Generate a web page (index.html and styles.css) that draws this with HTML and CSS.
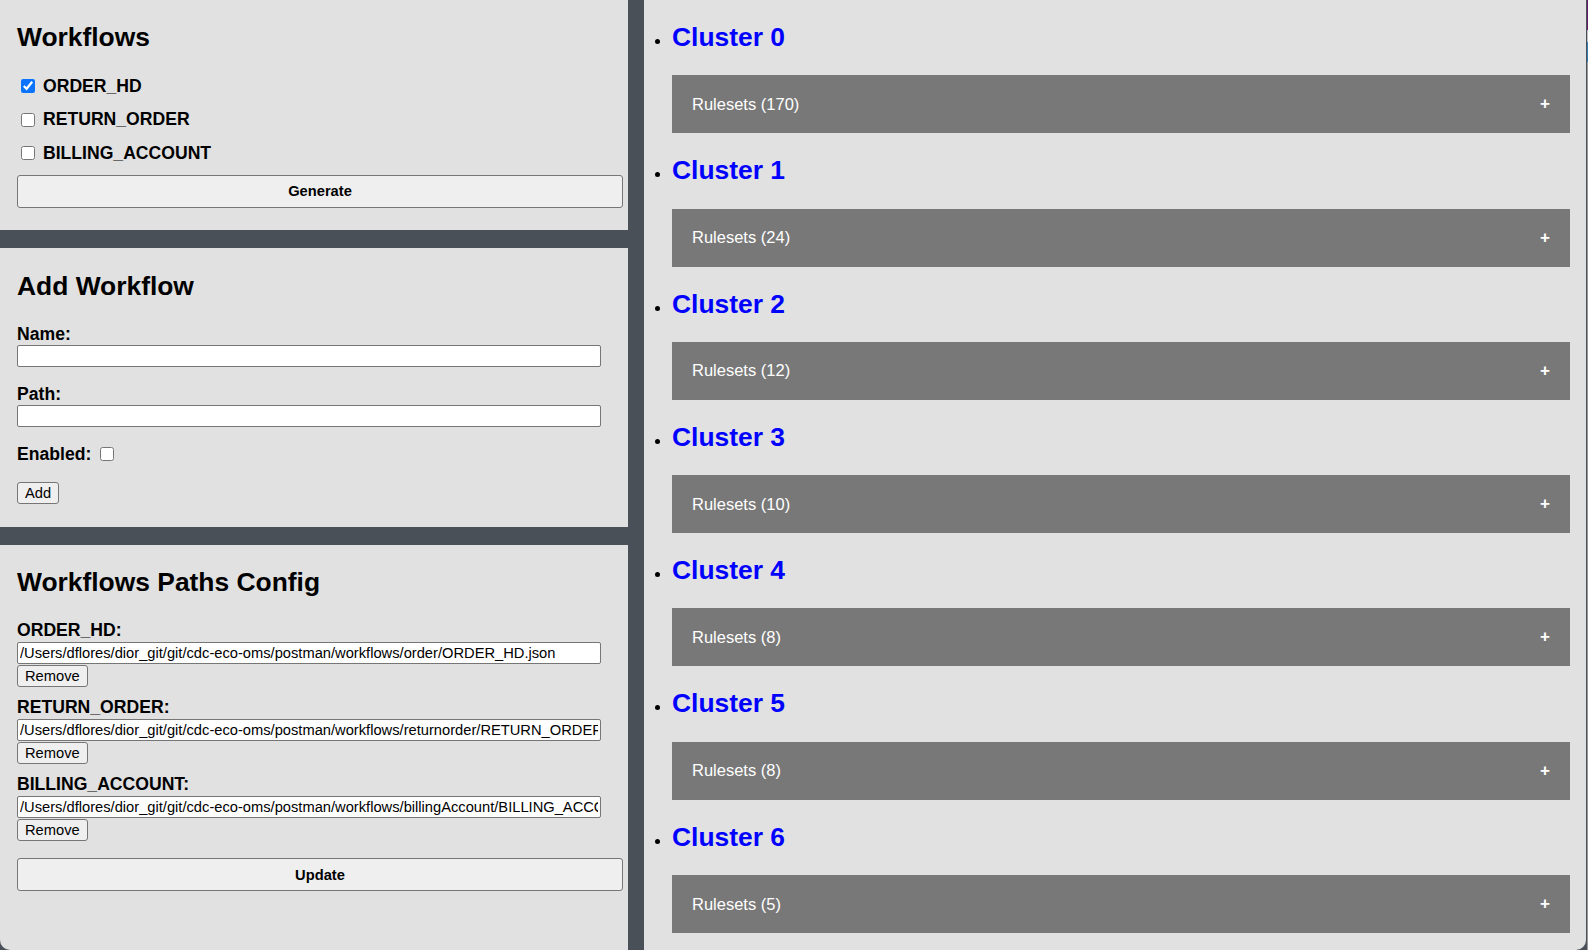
FILE: index.html
```html
<!DOCTYPE html>
<html lang="en">
<head>
<meta charset="utf-8">
<title>Workflows</title>
<link rel="stylesheet" href="styles.css">
</head>
<body>
<div class="left">
  <section class="panel p1">
    <h2 class="title">Workflows</h2>
    <label class="check-row"><input type="checkbox" checked> ORDER_HD</label>
    <label class="check-row"><input type="checkbox"> RETURN_ORDER</label>
    <label class="check-row"><input type="checkbox"> BILLING_ACCOUNT</label>
    <button class="wide-btn">Generate</button>
  </section>
  <section class="panel p2">
    <h2 class="title">Add Workflow</h2>
    <div class="field-label">Name:</div>
    <input class="text-in" type="text">
    <div class="field-label second">Path:</div>
    <input class="text-in" type="text">
    <label class="enabled-row">Enabled: <input type="checkbox"></label>
    <button class="small-btn add">Add</button>
  </section>
  <section class="panel p3">
    <h2 class="title">Workflows Paths Config</h2>
    <div class="cfg first">
      <div class="field-label">ORDER_HD:</div>
      <input class="text-in" type="text" value="/Users/dflores/dior_git/git/cdc-eco-oms/postman/workflows/order/ORDER_HD.json">
      <button class="small-btn">Remove</button>
    </div>
    <div class="cfg">
      <div class="field-label">RETURN_ORDER:</div>
      <input class="text-in" type="text" value="/Users/dflores/dior_git/git/cdc-eco-oms/postman/workflows/returnorder/RETURN_ORDER.json">
      <button class="small-btn">Remove</button>
    </div>
    <div class="cfg">
      <div class="field-label">BILLING_ACCOUNT:</div>
      <input class="text-in" type="text" value="/Users/dflores/dior_git/git/cdc-eco-oms/postman/workflows/billingAccount/BILLING_ACCOUNT.json">
      <button class="small-btn">Remove</button>
    </div>
    <button class="wide-btn update">Update</button>
  </section>
</div>
<main class="right">
  <ul class="clusters">
    <li><h2 class="cluster">Cluster 0</h2><div class="bar"><span>Rulesets (170)</span><span class="plus">+</span></div></li>
    <li><h2 class="cluster">Cluster 1</h2><div class="bar"><span>Rulesets (24)</span><span class="plus">+</span></div></li>
    <li><h2 class="cluster">Cluster 2</h2><div class="bar"><span>Rulesets (12)</span><span class="plus">+</span></div></li>
    <li><h2 class="cluster">Cluster 3</h2><div class="bar"><span>Rulesets (10)</span><span class="plus">+</span></div></li>
    <li><h2 class="cluster">Cluster 4</h2><div class="bar"><span>Rulesets (8)</span><span class="plus">+</span></div></li>
    <li><h2 class="cluster">Cluster 5</h2><div class="bar"><span>Rulesets (8)</span><span class="plus">+</span></div></li>
    <li><h2 class="cluster">Cluster 6</h2><div class="bar"><span>Rulesets (5)</span><span class="plus">+</span></div></li>
  </ul>
</main>
<div class="edge"></div>
</body>
</html>
```

FILE: styles.css
```css
* { box-sizing: border-box; }
html, body { height: 100%; }
body {
  margin: 0;
  background: #495057;
  font-family: "Liberation Sans", Arial, Helvetica, sans-serif;
  font-size: 17.6px;
  color: #000;
  display: flex;
  height: 950px;
  overflow: hidden;
}
.left {
  width: 628px;
  height: 950px;
  display: flex;
  flex-direction: column;
  gap: 18px;
  flex-shrink: 0;
}
.panel {
  background: #e1e1e1;
  padding: 0 5px 0 17px;
  display: flex;
  flex-direction: column;
  align-items: flex-start;
}
.p1 { height: 230px; }
.p2 { height: 279px; }
.p3 { flex: 1; border-bottom-left-radius: 10px; }
.title {
  font-size: 26.4px;
  line-height: 30px;
  font-weight: bold;
  margin: 22px 0 23px;
}
.p1 .title { margin-bottom: 24px; }
.check-row {
  display: flex;
  align-items: center;
  height: 20px;
  font-weight: bold;
  margin-bottom: 13.5px;
}
.check-row:last-of-type { margin-bottom: 11.5px; }
.check-row input {
  margin: 0 8px 0 4px;
  width: 14px;
  height: 14px;
}
input[type="checkbox"] { accent-color: #0b74ff; }
.wide-btn {
  width: 606px;
  height: 33px;
  margin-top: 0;
  font-family: inherit;
  font-size: 14.7px;
  font-weight: bold;
  background: #efefef;
  border: 1px solid #767676;
  border-radius: 3px;
  color: #000;
}
.field-label {
  font-weight: bold;
  line-height: 20px;
  margin-bottom: 2px;
}
.p2 .title { margin: 23px 0 23px; }
.p2 .field-label { margin-bottom: 1px; }
.p2 .second { margin-top: 17px; }
.text-in {
  width: 584px;
  height: 22px;
  margin: 0;
  padding: 1px 2px;
  font-family: inherit;
  font-size: 14.7px;
  border: 1px solid #767676;
  border-radius: 2px;
  background: #fff;
  color: #000;
}
.enabled-row {
  display: flex;
  align-items: center;
  height: 20px;
  margin-top: 17px;
  font-weight: bold;
}
.enabled-row input {
  margin: 0 0 0 9px;
  width: 14px;
  height: 14px;
}
.small-btn {
  height: 22px;
  padding: 0 7px;
  margin: 1px 0 0;
  font-family: inherit;
  font-size: 14.7px;
  background: #efefef;
  border: 1px solid #767676;
  border-radius: 3px;
  color: #000;
}
.small-btn.add { margin-top: 18px; }
.cfg {
  display: flex;
  flex-direction: column;
  align-items: flex-start;
  margin-top: 10px;
}
.cfg.first { margin-top: 0; }
.update { margin-top: 17px; }
.right {
  flex: 1;
  margin-left: 16px;
  margin-right: 1px;
  height: 950px;
  background: #e1e1e1;
  border-bottom-right-radius: 10px;
}
.clusters {
  margin: 0;
  padding: 0 16px 0 28px;
  list-style: disc;
}
.clusters li { font-size: 17.6px; }
.cluster {
  font-size: 26.4px;
  line-height: 30px;
  font-weight: bold;
  color: #0000ff;
  margin: 22px 0 23.3px;
}
.bar {
  height: 58px;
  background: #787878;
  color: #fff;
  font-size: 16.5px;
  display: flex;
  align-items: center;
  justify-content: space-between;
  padding: 0 20px 0 20px;
}
.plus {
  font-weight: bold;
  font-size: 17px;
}
.edge {
  width: 1px;
  height: 950px;
  flex-shrink: 0;
  background: linear-gradient(to bottom, #6a1b6a 0, #6a1b6a 30px, #bdbdbd 30px, #bdbdbd 42px, #2f7fb5 42px, #2f7fb5 62px, #9a9a9a 62px, #9a9a9a 100%);
}
```
